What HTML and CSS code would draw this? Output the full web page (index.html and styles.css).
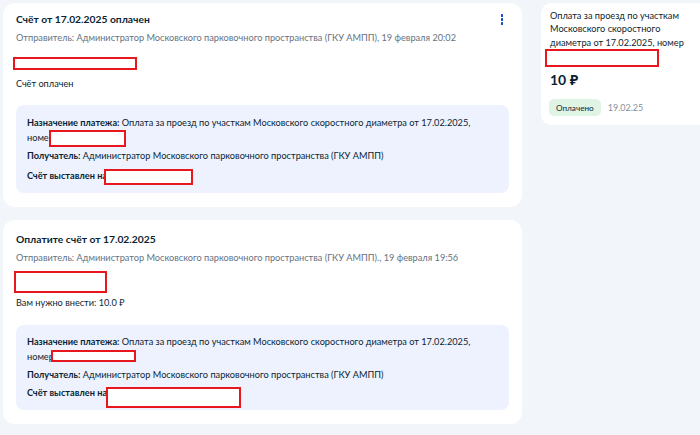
FILE: index.html
```html
<!DOCTYPE html>
<html lang="ru">
<head>
<meta charset="utf-8">
<link rel="stylesheet" href="styles.css">
</head>
<body>
<div class="page">
  <div class="feed">
    <section class="card card-first">
      <div class="card-head">
        <h2 class="title">Счёт от 17.02.2025 оплачен</h2>
        <button class="kebab" aria-label="Меню"><span></span><span></span><span></span></button>
      </div>
      <p class="sender">Отправитель: Администратор Московского парковочного пространства (ГКУ АМПП), 19 февраля 20:02</p>
      <div class="redact redact-a"></div>
      <p class="status">Счёт оплачен</p>
      <div class="details">
        <p class="line"><b>Назначение платежа:</b> Оплата за проезд по участкам Московского скоростного диаметра от 17.02.2025,<br>номер<span class="redact inline in-a1"></span></p>
        <p class="line gap"><b>Получатель:</b> Администратор Московского парковочного пространства (ГКУ АМПП)</p>
        <p class="line gap2"><b>Счёт выставлен на</b><span class="redact inline in-a2"></span></p>
      </div>
    </section>

    <section class="card card-second">
      <h2 class="title">Оплатите счёт от 17.02.2025</h2>
      <p class="sender">Отправитель: Администратор Московского парковочного пространства (ГКУ АМПП)., 19 февраля 19:56</p>
      <div class="redact redact-b"></div>
      <p class="status status-b">Вам нужно внести: 10.0 ₽</p>
      <div class="details">
        <p class="line"><b>Назначение платежа:</b> Оплата за проезд по участкам Московского скоростного диаметра от 17.02.2025,<br>номер<span class="redact inline in-b1"></span></p>
        <p class="line gap"><b>Получатель:</b> Администратор Московского парковочного пространства (ГКУ АМПП)</p>
        <p class="line gap"><b>Счёт выставлен на</b><span class="redact inline in-b2"></span></p>
      </div>
    </section>
  </div>

  <aside class="side-card">
    <p class="side-text">Оплата за проезд по участкам Московского скоростного диаметра от 17.02.2025, номер</p>
    <div class="redact redact-side"></div>
    <div class="amount">10 ₽</div>
    <div class="side-foot">
      <span class="badge">Оплачено</span>
      <span class="date">19.02.25</span>
    </div>
  </aside>
</div>
</body>
</html>
```

FILE: styles.css
```css
* { box-sizing: border-box; }
html, body { margin: 0; padding: 0; }
body {
  background: #f2f5fa;
  font-family: Lato, "Noto Sans", sans-serif;
  color: #0b1f33;
  width: 700px;
  height: 435px;
  overflow: hidden;
}
p { margin: 0; }
h2 { margin: 0; }

.page {
  display: flex;
  align-items: flex-start;
  gap: 19px;
  padding: 3px 0 0 3px;
}

.feed {
  width: 519px;
  display: flex;
  flex-direction: column;
  gap: 13px;
  flex-shrink: 0;
}

.card {
  background: #ffffff;
  border-radius: 12px;
  padding: 7px 13px 14px 13px;
}
.card-second { padding-top: 10px; }

.card-head {
  display: flex;
  justify-content: space-between;
  align-items: flex-start;
}

.title {
  font-size: 10.3px;
  line-height: 18px;
  font-weight: 700;
}

.kebab {
  border: 0;
  background: none;
  padding: 0;
  margin: 4px 6px 0 0;
  display: flex;
  flex-direction: column;
  gap: 1.5px;
  cursor: pointer;
}
.kebab span {
  width: 2.5px;
  height: 2.5px;
  background: #0d4cd3;
  border-radius: 0.5px;
}

.sender {
  font-size: 9.2px;
  line-height: 16px;
  color: #66727f;
  margin-top: 2px;
}

.redact {
  border: 2px solid #e8161d;
  background: #fff;
}
.redact-a {
  width: 124px;
  height: 13px;
  margin: 11px 0 0 -3px;
}
.redact-b {
  width: 93px;
  height: 22px;
  margin: 5px 0 0 -2px;
}

.status {
  font-size: 9.2px;
  line-height: 16px;
  margin-top: 6px;
}
.status-b { margin-top: 2px; }

.details {
  margin-top: 13px;
  background: #edf2fe;
  border-radius: 8px;
  padding: 9.5px 11px 10px 11px;
}
.card-second .details { margin-top: 14px; }

.line {
  font-size: 9.2px;
  line-height: 15px;
}
.line b { font-weight: 700; }
.gap { margin-top: 3px; }
.gap2 { margin-top: 5px; }

.redact.inline {
  display: inline-block;
}
.in-a1 { width: 77px; height: 17px; margin: -2px 0 -4px -5px; vertical-align: -2px; }
.in-a2 { width: 89px; height: 16px; margin: -2px 0 -4px -3px; vertical-align: -2px; }
.in-b1 { width: 85px; height: 12px; margin: 0 0 -2px -3px; vertical-align: 0; }
.in-b2 { width: 135px; height: 21px; margin: -3px 0 -8px -1px; vertical-align: -4px; }

.side-card {
  width: 170px;
  flex-shrink: 0;
  background: #ffffff;
  border-radius: 10px;
  padding: 6px 8px 9px 8px;
}
.side-text {
  font-size: 9.2px;
  line-height: 13.4px;
  width: 142px;
  padding-left: 1px;
}
.redact-side {
  width: 114px;
  height: 18px;
  margin-left: -4px;
}
.amount {
  font-size: 14px;
  font-weight: 700;
  line-height: 20px;
  margin-top: 3px;
  padding-left: 1px;
}
.side-foot {
  display: flex;
  align-items: center;
  gap: 7px;
  margin-top: 9px;
}
.badge {
  background: #e0f4e6;
  border-radius: 5px;
  font-size: 8.2px;
  line-height: 16px;
  padding: 0 7px;
  height: 17px;
  display: inline-flex;
  align-items: center;
}
.date {
  font-size: 9px;
  color: #86909c;
}
```
